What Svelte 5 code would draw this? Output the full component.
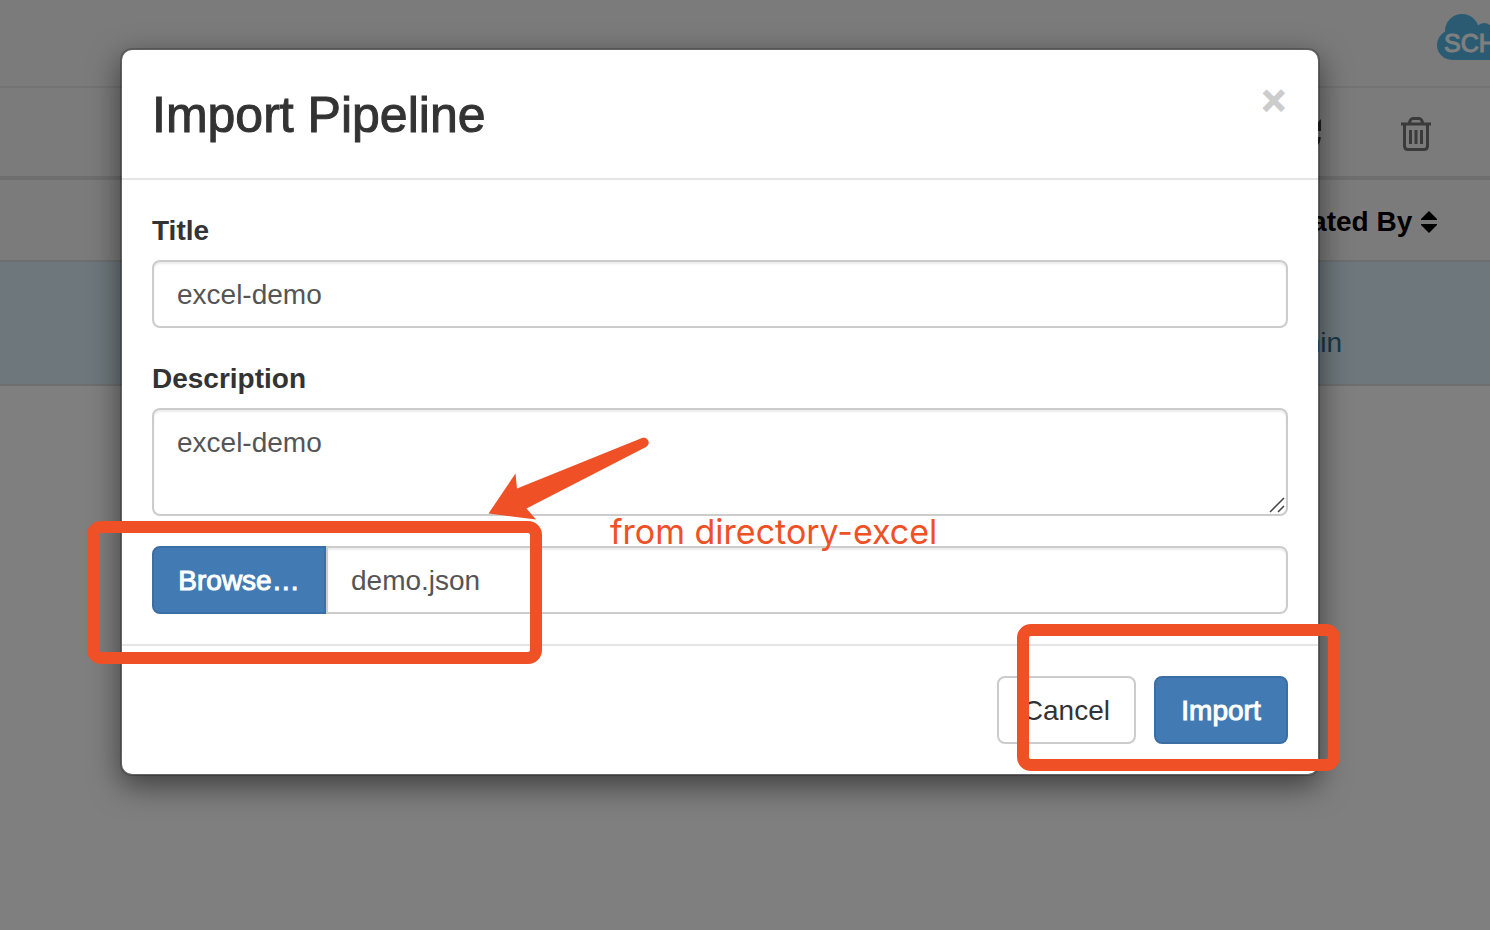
<script>
  let title = $state('excel-demo');
  let description = $state('excel-demo');
  let fileName = $state('demo.json');
</script>

<div class="screen">
  <div class="page">
    <header class="topbar">
      <svg class="logo" width="53" height="46" viewBox="0 0 53 46" role="img" aria-label="Cloud logo">
        <g fill="#56b7e6">
          <circle cx="15" cy="31" r="15" />
          <circle cx="25" cy="17" r="17" />
          <circle cx="47" cy="18" r="9" />
          <path d="M15 16H53V46H15Z" />
        </g>
        <text x="7" y="38" font-size="25" fill="#ffffff" stroke="#ffffff">SCH</text>
      </svg>
    </header>
    <div class="toolbar">
      <button class="icon" aria-label="Refresh">
        <svg width="32" height="34" viewBox="0 0 32 34" fill="none" stroke="#444444" stroke-width="4">
          <path d="M4 14A13 13 0 0 1 27 9M29 20A13 13 0 0 1 5 26" />
          <path d="M31 2V14H19ZM1 32V20H13Z" fill="#444444" stroke="none" />
        </svg>
      </button>
      <button class="icon" aria-label="Delete">
        <svg width="32" height="34" viewBox="0 0 32 34" fill="none" stroke="#747474" stroke-width="3">
          <path d="M1 7H31M9 6.500L10.500 3Q11.500 1.500 13 1.500H19Q20.500 1.500 21.500 3L23 6.500M4.500 7V29Q4.500 32.500 8 32.500H24Q27.500 32.500 27.500 29V7" />
          <path d="M10.500 13V27M16 13V27M21.500 13V27" />
        </svg>
      </button>
    </div>
    <table>
      <thead>
        <tr>
          <th>
            Created By
            <svg width="18" height="22" viewBox="0 0 18 22" aria-hidden="true">
              <path d="M9 0L17 8V9H1V8ZM1 13H17V14L9 22L1 14Z" fill="#000000" />
            </svg>
          </th>
        </tr>
      </thead>
      <tbody>
        <tr><td>admin</td></tr>
      </tbody>
    </table>
  </div>

  <div class="backdrop">
    <div class="modal" role="dialog" aria-labelledby="dialog-title">
      <div class="head">
        <h4 id="dialog-title">Import Pipeline</h4>
        <button class="close" aria-label="Close">×</button>
      </div>

      <form class="body">
        <div class="group">
          <label for="title">Title</label>
          <input id="title" type="text" bind:value={title} />
        </div>
        <div class="group">
          <label for="description">Description</label>
          <textarea id="description" rows="2" bind:value={description}></textarea>
          <svg class="grip" width="16" height="16" viewBox="0 0 16 16" aria-hidden="true">
            <path d="M1 15L15 1M9 15L15 9" fill="none" stroke="#444444" stroke-width="1.500" />
          </svg>
          <svg class="arrow" width="162" height="84" viewBox="488 437 162 84" aria-hidden="true">
            <path d="M488.500 513.500L515.500 473.500L517 488.500L642 438C647 436 652 443 646 447L526.500 508.500L536 519.500Z" fill="#f05025" />
          </svg>
        </div>
        <div class="file">
          <button type="button" class="btn primary browse">Browse…</button>
          <input type="text" aria-label="Selected file" readonly value={fileName} />
          <span class="mark mark-file"></span>
          <span class="note">from directory-excel</span>
        </div>
      </form>

      <div class="foot">
        <button class="btn">Cancel</button>
        <button class="btn primary">Import</button>
        <span class="mark mark-actions"></span>
      </div>
    </div>
  </div>
</div>

<style>
  :global(body) {
    margin: 0;
  }

  * {
    box-sizing: border-box;
  }

  .screen {
    position: relative;
    min-height: 100vh;
    overflow: hidden;
    background: #ffffff;
    color: #333333;
    font: 28px/40px 'Liberation Sans', Arial, sans-serif;
  }

  button,
  input,
  textarea {
    margin: 0;
    font: inherit;
  }

  .topbar {
    display: flex;
    justify-content: flex-end;
    height: 88px;
    padding-top: 14px;
    background: #f7f7f7;
    border-bottom: 2px solid #e7e7e7;
  }

  .logo {
    display: block;
  }

  .toolbar {
    display: flex;
    justify-content: flex-end;
    align-items: center;
    gap: 78px;
    height: 92px;
    padding: 4px 58px 0 0;
    background: #f7f7f7;
    border-bottom: 4px solid #dddddd;
  }

  .icon {
    padding: 0;
    border: 0;
    background: none;
  }

  .icon svg {
    display: block;
  }

  table {
    width: 100%;
    border-collapse: separate;
    border-spacing: 0;
  }

  th,
  td {
    text-align: right;
    border-bottom: 2px solid #dddddd;
  }

  th {
    height: 82px;
    padding: 4px 52px 0 0;
    background: #f7f7f7;
    color: #000000;
    vertical-align: middle;
  }

  th svg {
    vertical-align: -2px;
  }

  td {
    height: 124px;
    padding: 40px 148px 0 0;
    background: #dceef8;
    color: #31708f;
  }

  .backdrop {
    position: absolute;
    inset: 0;
    padding: 48px 170px 48px 120px;
    background: rgba(0, 0, 0, 0.5);
  }

  .modal {
    background: #ffffff;
    background-clip: padding-box;
    border: 2px solid rgba(0, 0, 0, 0.2);
    border-radius: 12px;
    box-shadow: 0 10px 30px rgba(0, 0, 0, 0.5);
  }

  .head {
    display: flex;
    justify-content: space-between;
    align-items: flex-start;
    padding: 30px 32px 30px 30px;
    border-bottom: 2px solid #e5e5e5;
  }

  h4 {
    margin: 0;
    padding-top: 2px;
    font-size: 50px;
    line-height: 66px;
    font-weight: 400;
    -webkit-text-stroke: 1px #333333;
  }

  .close {
    padding: 0;
    border: 0;
    background: none;
    color: #cccccc;
    font-size: 42px;
    line-height: 42px;
    font-weight: 700;
    -webkit-text-stroke: 1px #cccccc;
  }

  .body {
    display: flex;
    flex-direction: column;
    gap: 30px;
    padding: 30px;
  }

  .group {
    position: relative;
    display: flex;
    flex-direction: column;
    gap: 10px;
  }

  label {
    padding-top: 2px;
    line-height: 38px;
    font-weight: 700;
  }

  input,
  textarea {
    display: block;
    width: 100%;
    padding: 13px 23px 11px;
    border: 2px solid #cccccc;
    border-radius: 8px;
    background: #ffffff;
    box-shadow: inset 0 2px 2px rgba(0, 0, 0, 0.08);
    color: #555555;
    outline: none;
  }

  input {
    height: 68px;
  }

  textarea {
    height: 108px;
    resize: none;
    overflow: hidden;
  }

  .grip {
    position: absolute;
    right: 3px;
    bottom: 3px;
  }

  .arrow {
    position: absolute;
    left: 336px;
    bottom: -5px;
    z-index: 2;
  }

  .file {
    position: relative;
    z-index: 1;
    display: flex;
  }

  .file input {
    flex: 1;
    min-width: 0;
    border-radius: 0 8px 8px 0;
  }

  .btn {
    height: 68px;
    min-width: 134px;
    padding: 13px 24px 11px;
    border: 2px solid #cccccc;
    border-radius: 8px;
    background: #ffffff;
    color: #333333;
    white-space: nowrap;
  }

  .primary {
    border-color: #3b6ea5;
    background: #427bb3;
    color: #ffffff;
    -webkit-text-stroke: 1px #ffffff;
  }

  .browse {
    min-width: 174px;
    border-radius: 8px 0 0 8px;
  }

  .foot {
    position: relative;
    display: flex;
    justify-content: flex-end;
    gap: 18px;
    padding: 30px;
    border-top: 2px solid #e5e5e5;
  }

  .mark {
    position: absolute;
    border: 12px solid #f05025;
    border-radius: 14px;
    pointer-events: none;
  }

  .mark-file {
    left: -65px;
    top: -25px;
    width: 455px;
    height: 143px;
  }

  .mark-actions {
    right: -22px;
    top: -22px;
    width: 323px;
    height: 147px;
  }

  .note {
    position: absolute;
    left: 458px;
    top: -36px;
    color: #f05025;
    font-family: Inter, sans-serif;
    font-size: 34px;
    line-height: 44px;
    white-space: nowrap;
  }
</style>
